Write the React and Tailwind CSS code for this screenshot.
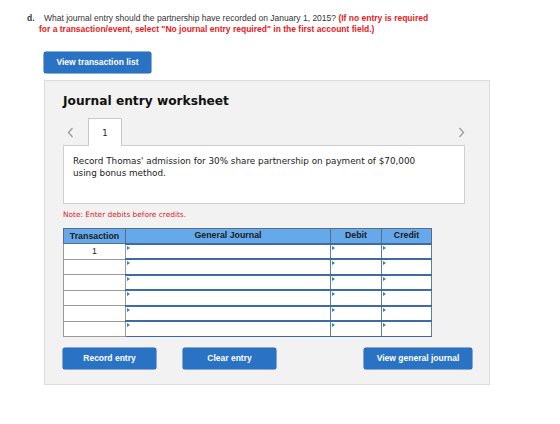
import React from "react";

const rows = [1, 2, 3, 4, 5, 6];

function Marker() {
    return (
        <span className="absolute left-[1px] top-[1px] w-0 h-0 border-t-[2px] border-b-[2px] border-l-[3px] border-t-transparent border-b-transparent border-l-[#2f7fd0]" />
    );
}

function Chevron({ dir }) {
    return (
        <svg width="7" height="11" viewBox="0 0 7 11" fill="none" stroke="#9b9b9b" strokeWidth="1.3">
            {dir === "left" ? <path d="M5.5 1 L1.5 5.5 L5.5 10" /> : <path d="M1.5 1 L5.5 5.5 L1.5 10" />}
        </svg>
    );
}

export default function App() {
    const blueBtn =
        "bg-[#2a72c4] text-white font-bold text-[8.5px] rounded-[2px] flex items-center justify-center shadow-[0_0_0_0.5px_#1d5ea8]";

    return (
        <div className="w-[560px] h-[424px] bg-white relative font-['Liberation_Sans',Arial,sans-serif]">
            {/* question */}
            <div className="pt-[13px] pl-[27px] text-[8.5px] leading-[11px] text-[#333]">
                <div className="flex">
                    <span className="w-[17px] font-bold">d.</span>
                    <span>
                        What journal entry should the partnership have recorded on January 1, 2015?{" "}
                        <span className="text-[#e8191c] font-bold">(If no entry is required</span>
                    </span>
                </div>
                <div className="pl-[12px] text-[#e8191c] font-bold">
                    for a transaction/event, select "No journal entry required" in the first account field.)
                </div>
            </div>

            <div className="pl-[44px] pt-[17px]">
                <button className={`${blueBtn} w-[107px] h-[21px]`}>View transaction list</button>
            </div>

            {/* panel */}
            <div className="ml-[44px] mt-[7px] w-[446px] h-[305px] bg-[#f2f2f2] border border-[#dcdcdc] font-['DejaVu_Sans',Verdana,sans-serif]">
                <div className="pl-[18px] pt-[13px] text-[12.2px] font-bold text-[#111] leading-[15px]">
                    Journal entry worksheet
                </div>

                <div className="flex items-end pl-[18px] pr-[24px] mt-[8px] h-[28px]">
                    <span className="w-[25px] pl-[4px] pb-[7px] flex">
                        <Chevron dir="left" />
                    </span>
                    <div className="w-[34px] h-[28px] bg-white border border-[#c9c9c9] border-b-0 flex justify-center pt-[9px] text-[8.5px] leading-[10px] text-[#222] relative z-10 -mb-[1px]">
                        1
                    </div>
                    <div className="flex-1" />
                    <span className="pb-[7px] flex">
                        <Chevron dir="right" />
                    </span>
                </div>

                <div className="ml-[18px] w-[402px] h-[59px] bg-white border border-[#cfcfcf] px-[9px] pt-[9px] text-[8.8px] leading-[12px] text-[#222]">
                    Record Thomas' admission for 30% share partnership on payment of $70,000
                    <br />
                    using bonus method.
                </div>

                <div className="pl-[18px] pt-[5px] text-[7.4px] text-[#d2232a]">Note: Enter debits before credits.</div>

                <table className="ml-[18px] mt-[8px] border-collapse font-['Liberation_Sans',Arial,sans-serif] text-[8.8px]">
                    <thead>
                        <tr className="h-[15px] bg-[#66a9ea] text-[#1a1a1a]">
                            <th className="w-[62px] border border-[#5a6f86] font-bold">Transaction</th>
                            <th className="w-[205px] border border-[#5a6f86] font-bold">General Journal</th>
                            <th className="w-[51px] border border-[#5a6f86] font-bold">Debit</th>
                            <th className="w-[50px] border border-[#5a6f86] font-bold">Credit</th>
                        </tr>
                    </thead>
                    <tbody>
                        {rows.map((r) => (
                            <tr key={r} className="h-[15.5px]">
                                <td className="bg-white border border-[#9a9a9a] text-center text-[#222] align-top pt-[1px]">
                                    {r === 1 ? "1" : ""}
                                </td>
                                <td className="bg-white border-x border-[#5d7ea3] border-t-[2px] border-t-[#3f6c9e] border-b border-b-[#3f6c9e] relative">
                                    <Marker />
                                </td>
                                <td className="bg-white border-x border-[#5d7ea3] border-t-[2px] border-t-[#3f6c9e] border-b border-b-[#3f6c9e] relative">
                                    <Marker />
                                </td>
                                <td className="bg-white border-x border-[#5d7ea3] border-t-[2px] border-t-[#3f6c9e] border-b border-b-[#3f6c9e] relative">
                                    <Marker />
                                </td>
                            </tr>
                        ))}
                    </tbody>
                </table>

                <div className="flex pl-[18px] pt-[11px] font-['Liberation_Sans',Arial,sans-serif]">
                    <button className={`${blueBtn} w-[93px] h-[21px]`}>Record entry</button>
                    <button className={`${blueBtn} w-[93px] h-[21px] ml-[27px]`}>Clear entry</button>
                    <button className={`${blueBtn} w-[108px] h-[21px] ml-[88px]`}>View general journal</button>
                </div>
            </div>
        </div>
    );
}
